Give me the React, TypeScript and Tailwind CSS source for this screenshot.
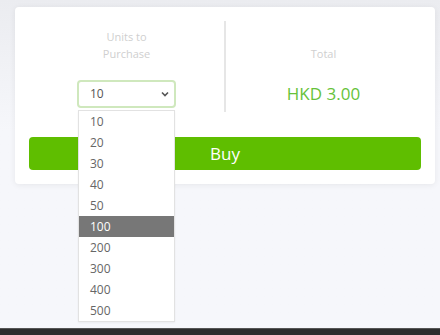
import React from 'react';

const options = [10, 20, 30, 40, 50, 100, 200, 300, 400, 500];

const App: React.FC = () => {
  const selected = 100;

  return (
    <div
      className="w-[440px] h-[335px] flex flex-col overflow-hidden"
      style={{ fontFamily: '"Open Sans", "Noto Sans", sans-serif' }}
    >
      <div className="flex-1 bg-gradient-to-b from-[#ebecf0] to-[#f6f7fb] to-[40%] pl-[15px] pr-[5px] pt-[7px]">
        <div className="bg-white rounded-[4px] shadow-[0_1px_6px_rgba(0,0,0,0.07)] px-[14px] pt-[14px] pb-[14px]">
          <div className="grid grid-cols-[1fr_2px_1fr]">
            {/* units column */}
            <div className="flex flex-col items-center pt-[7px] pb-[4px]">
              <div className="h-[34px] flex items-end justify-center text-center text-[11px] leading-[17px] text-[#cfcfcf]">
                Units to
                <br />
                Purchase
              </div>
              <div className="relative mt-[18px]">
                <div className="w-[99px] h-[28px] border-2 border-[#cfe8bd] rounded-[4px] flex items-center justify-between pl-[11px] pr-[5px] text-[12px] text-[#555]">
                  <span>10</span>
                  <svg width="8" height="6" viewBox="0 0 8 6" fill="none">
                    <path d="M1 1.5 L4 4.5 L7 1.5" stroke="#555" strokeWidth="1.6" />
                  </svg>
                </div>
                <ul className="absolute left-[1px] top-[30px] w-[97px] bg-white border border-[#e2e2e2] shadow-[0_1px_2px_rgba(0,0,0,0.05)] z-10">
                  {options.map((opt) => (
                    <li
                      key={opt}
                      className={`h-[21px] flex items-center pl-[11px] text-[12px] ${
                        opt === selected ? 'bg-[#777777] text-white' : 'text-[#666]'
                      }`}
                    >
                      {opt}
                    </li>
                  ))}
                </ul>
              </div>
            </div>

            <div className="bg-[#e6e6e6]" />

            {/* total column */}
            <div className="flex flex-col items-center pt-[7px] pb-[4px]">
              <div className="h-[34px] flex items-end justify-center text-[11px] leading-[17px] text-[#cfcfcf]">
                Total
              </div>
              <div className="mt-[18px] h-[28px] flex items-center text-[17px] text-[#66c23a]">
                HKD 3.00
              </div>
            </div>
          </div>

          <button className="mt-[25px] w-full h-[33px] rounded-[4px] bg-[#5fbe00] text-white text-[17px] flex items-center justify-center">
            Buy
          </button>
        </div>
      </div>
      <div className="h-[7px] bg-[#2e2e2e] border-t border-[#555]" />
    </div>
  );
};

export default App;
